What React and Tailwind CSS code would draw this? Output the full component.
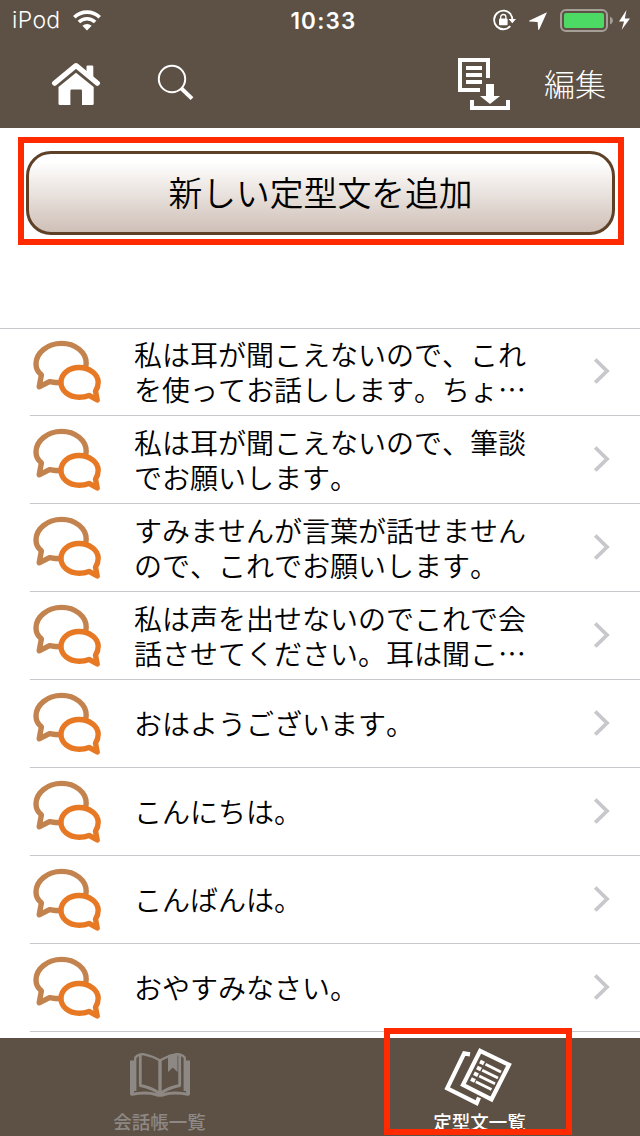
import React from "react";

const phrases = [
  ["私は耳が聞こえないので、これ", "を使ってお話しします。ちょ…"],
  ["私は耳が聞こえないので、筆談", "でお願いします。"],
  ["すみませんが言葉が話せません", "ので、これでお願いします。"],
  ["私は声を出せないのでこれで会", "話させてください。耳は聞こ…"],
  ["おはようございます。"],
  ["こんにちは。"],
  ["こんばんは。"],
  ["おやすみなさい。"],
];

function WifiIcon() {
  return (
    <svg className="ml-[11px] h-[21px] w-7" viewBox="0 0 28 21" fill="none" stroke="#fff" strokeWidth="3.6">
      <path d="M1.3 7.3A18.2 18.2 0 0 1 26.7 7.3" />
      <path d="M5.9 12A11.6 11.6 0 0 1 22.1 12" />
      <path d="M14 20.4L9.4 15.8A6.8 6.8 0 0 1 18.6 15.8Z" fill="#fff" stroke="none" />
    </svg>
  );
}

function StatusIcons() {
  return (
    <svg className="h-10 w-[148px]" viewBox="492 0 148 40" fill="none">
      <path d="M511.2 14.2A9.3 9.3 0 1 0 510.8 26.2" transform="translate(-0.5 0)" stroke="#fff" strokeWidth="1.8" />
      <path d="M510.4 14Q512.4 16.6 512.4 20" stroke="#fff" strokeWidth="1.8" />
      <path d="M508.6 19H516L512.3 23.2Z" fill="#fff" />
      <rect x="499" y="18.5" width="8.6" height="6.7" rx="1" fill="#fff" />
      <path d="M500.7 19v-1.9a2.6 2.6 0 0 1 5.2 0V19" stroke="#fff" strokeWidth="1.3" />
      <path d="M547 12.2L529 20.7Q528.8 21.4 529.6 21.5L537.6 22L538.2 29.4Q538.5 30.5 539.2 29.5Z" fill="#fff" />
      <rect x="561" y="10" width="46" height="21" rx="5" stroke="#a69f98" strokeWidth="2" />
      <rect x="564" y="13" width="40" height="15" rx="2" fill="#4cd964" />
      <path d="M610 16.5Q613 18 613 20.5T610 24.5Z" fill="#a69f98" />
      <path d="M626.5 10L619 21.5H624L621.7 29.7L630 18.5H624.8Z" fill="#fff" />
    </svg>
  );
}

function HomeIcon() {
  return (
    <svg className="h-[44px] w-[50px]" viewBox="51 62 50 44">
      <path d="M54.6 83.2L76 65.6L97.4 83.2" fill="none" stroke="#fff" strokeWidth="5.2" strokeLinecap="round" strokeLinejoin="round" />
      <path d="M86.5 72V66.7Q86.5 65.6 87.6 65.6H92Q93.3 65.6 93.3 66.7V79Z" fill="#fff" />
      <path d="M58.5 87L76 72.8L93.7 87V103.5Q93.7 105 92.2 105H82V90.7Q82 89.5 80.8 89.5H71.6Q70.4 89.5 70.4 90.7V105H60Q58.5 105 58.5 103.5Z" fill="#fff" />
    </svg>
  );
}

function SearchIcon() {
  return (
    <svg className="h-[38px] w-[38px]" viewBox="157 64 38 38" fill="none" stroke="#fff">
      <circle cx="172" cy="79" r="13.2" strokeWidth="2" />
      <path d="M181.2 88.2L192 98.6" strokeWidth="4" />
    </svg>
  );
}

function ImportIcon() {
  return (
    <svg className="h-[54px] w-[54px]" viewBox="457 57 54 54" fill="none" stroke="#fff">
      <path d="M488 78V60H460V90H480" strokeWidth="4" />
      <path d="M466 67.9H482M466 75H482M466 82H482" strokeWidth="4" />
      <path d="M486 84H494V96H500L490 104L480 96H486Z" fill="#fff" stroke="none" />
      <path d="M472 100V108H508V100" strokeWidth="4" />
    </svg>
  );
}

function TalkIcon() {
  return (
    <svg className="h-16 w-[70px] shrink-0" viewBox="0 0 70 64" fill="none" strokeWidth="5.4" strokeLinejoin="round">
      <path
        d="M28.5 3.4C42.5 3.4 53.2 12.4 53.2 23.3C53.2 34.5 42.5 42.8 29 42.8Q22 42.8 16.5 41.6L6.2 46.8L8.4 34.8C4.8 32 3 28 3 24C3 12.4 15 3.4 28.5 3.4Z"
        stroke="#c3834e"
      />
      <path
        d="M46 27.5C56.5 27.5 65.2 34.2 65.2 42.3C65.2 46.6 64.1 48.6 62.5 51.1L64.2 60L56 55.4C53 56.6 49.5 57.2 46.2 57.2C35.6 57.2 28 50.8 28 42.3C28 34.2 35.6 27.5 46 27.5Z"
        fill="#fff"
        stroke="#e87924"
      />
    </svg>
  );
}

function BookIcon() {
  return (
    <svg className="h-[46px] w-16" viewBox="128 1051 64 46" fill="none" stroke="#8d8884" strokeLinejoin="round">
      <path d="M132 1060.5V1095M188 1060.5V1095" strokeWidth="4" />
      <path d="M131 1094.5Q146 1091.5 156 1094.5Q160 1096 164 1094.5Q174 1091.5 189 1094.5" strokeWidth="3" />
      <path d="M135.2 1091V1057.5Q139 1053.5 144 1054.3Q154 1056.5 160 1060.5Q166 1056.5 176 1054.3Q181 1053.5 184.8 1057.5V1091" strokeWidth="2.4" />
      <path d="M140.3 1055V1085.5Q151 1087.5 160 1093.5Q169 1087.5 179.7 1085.5V1055" strokeWidth="2.8" />
      <path d="M160 1060V1095" strokeWidth="3.4" />
      <path d="M168 1055L177.5 1053V1072L172.8 1067.5L168 1072Z" fill="#8d8884" stroke="none" />
    </svg>
  );
}

function DocumentsIcon() {
  return (
    <svg className="h-[60px] w-[72px]" viewBox="444 1047 72 60" fill="none" stroke="#fff">
      <path d="M470 1054.3L464.2 1053.4L447.2 1088.3L476.7 1103.2L479 1097.5" strokeWidth="4.2" />
      <path d="M480.2 1050.8L509 1064.8L491.5 1099.3L463 1084.8Z" strokeWidth="4.2" />
      <path d="M485.5 1064.3L501 1072M482.2 1070.2L498 1078M479.2 1075.9L495 1083.7M475.8 1081.8L491.5 1089.5" strokeWidth="2.8" />
      <path d="M480 1061.5L484 1063.5M477 1067.5L481 1069.5M474 1073.2L478 1075.2M471 1079L475 1081" strokeWidth="4" />
    </svg>
  );
}

function Chevron() {
  return (
    <svg className="-mt-0.5 h-7 w-[18px] shrink-0" viewBox="0 0 18 28" fill="none" stroke="#c7c7cc" strokeWidth="3.8">
      <path d="M2.2 2.5L14 14L2.2 25.5" />
    </svg>
  );
}

export default function App() {
  return (
    <div className="relative flex h-[1136px] w-[640px] flex-col overflow-hidden bg-white font-['Noto_Sans_CJK_JP',sans-serif] text-black [font-kerning:none]">
      <header className="h-32 shrink-0 bg-[#5d5145] text-white">
        <div className="grid h-10 grid-cols-[1fr_auto_1fr] items-center font-['Inter',sans-serif]">
          <div className="flex items-center pl-3">
            <span className="w-[50px] pt-px text-[23px] leading-[39px] font-light tracking-[0.3px]">iPod</span>
            <WifiIcon />
          </div>
          <span className="pt-0.5 pl-[7px] text-[22.5px] leading-[38px] font-semibold tracking-[1.2px]">10:33</span>
          <div className="flex justify-end">
            <StatusIcons />
          </div>
        </div>
        <nav className="flex h-[88px] items-center justify-between pr-[34px] pl-[51px]">
          <div className="flex items-center gap-14">
            <button aria-label="ホーム"><HomeIcon /></button>
            <button aria-label="検索" className="-mt-0.5"><SearchIcon /></button>
          </div>
          <div className="flex items-center gap-[33px]">
            <button aria-label="取り込み"><ImportIcon /></button>
            <button className="-mt-0.5 text-[31px] leading-10 font-light">編集</button>
          </div>
        </nav>
      </header>

      <main className="flex flex-1 flex-col">
        <div className="h-[200px] pt-[9px] pl-[18px]">
          <div className="flex h-[108px] w-[606px] border-6 border-[#ff2a00] pt-2 pl-0.5">
            <button className="h-[84px] w-[589px] rounded-[25px] border-3 border-[#5f4128] bg-linear-to-b from-white from-10% to-[#cfc0b7] pb-0.5 text-[33.8px] font-[350]">
              新しい定型文を追加
            </button>
          </div>
        </div>
        <ul className="border-t border-[#c8c7cc]">
          {phrases.map((lines) => (
            <li key={lines[0]} className="h-[88px] pl-[30px] first:h-[87px]">
              <div className="flex h-full items-center border-b border-[#c8c7cc] pr-[29px] pl-[3px]">
                <TalkIcon />
                <p className="ml-[31px] flex-1 text-[28px] leading-[35px]">
                  {lines.map((line) => (
                    <span key={line} className="block whitespace-nowrap font-[350]">{line}</span>
                  ))}
                </p>
                <Chevron />
              </div>
            </li>
          ))}
        </ul>
      </main>

      <footer className="grid h-[98px] shrink-0 grid-cols-2 bg-[#5d5145] text-[18.5px] font-medium">
        <div className="flex flex-col items-center pt-[13px] text-[#8d8884]">
          <BookIcon />
          <span className="mt-3 pr-px leading-6">会話帳一覧</span>
        </div>
        <div className="flex flex-col items-center pt-[9px] text-white">
          <DocumentsIcon />
          <span className="mt-0.5 pr-px leading-6">定型文一覧</span>
        </div>
      </footer>
      <div className="absolute top-[1028px] left-[384px] h-[107px] w-[188px] border-6 border-[#ff2a00]" />
    </div>
  );
}
